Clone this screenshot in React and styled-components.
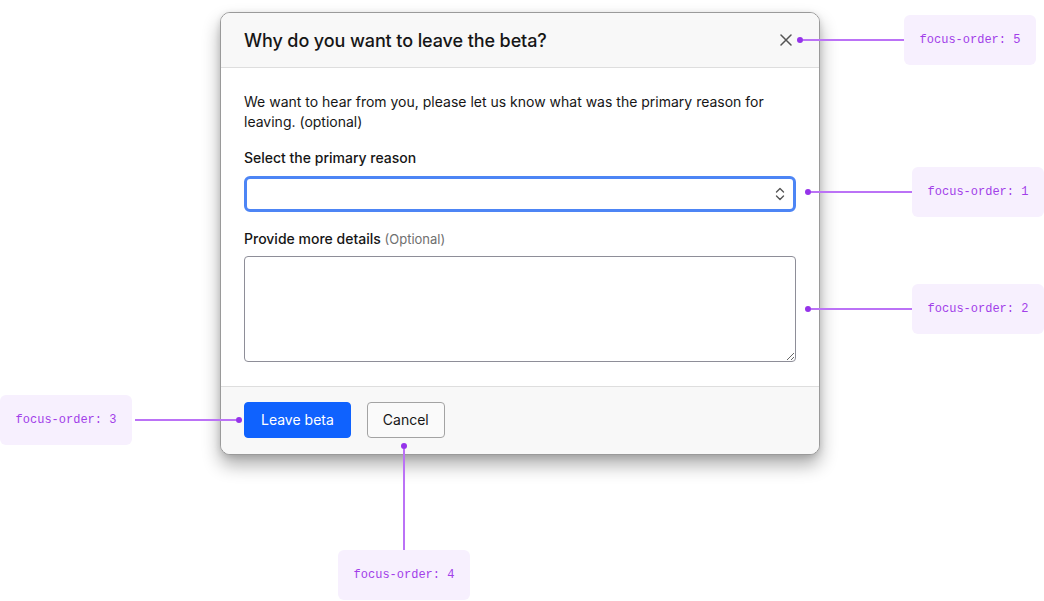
import React from 'react';
import styled, { createGlobalStyle } from 'styled-components';

const GlobalStyle = createGlobalStyle`
    html, body {
        margin: 0;
        padding: 0;
        background: #ffffff;
    }
    body {
        font-family: Inter, "Noto Sans", "Liberation Sans", sans-serif;
        color: #161616;
    }
`

const Canvas = styled.div`
    position: relative;
    width: 1044px;
    height: 601px;
    padding: 12px 0 0 220px;
    box-sizing: border-box;
    overflow: hidden;
`

const Modal = styled.div`
    width: 600px;
    box-sizing: border-box;
    border: 1px solid #9a9a9a;
    border-radius: 10px;
    background: #ffffff;
    box-shadow: 0 10px 18px rgba(0, 0, 0, 0.32), 0 2px 6px rgba(0, 0, 0, 0.12);
    overflow: hidden;
`

const Header = styled.div`
    height: 54px;
    display: flex;
    align-items: center;
    justify-content: space-between;
    padding: 0 23px;
    background: #f8f8f8;
    border-bottom: 1px solid #dedede;
`

const Title = styled.h2`
    margin: 0;
    font-size: 18px;
    font-weight: 500;
    color: #161616;
    letter-spacing: -0.1px;
`

const CloseButton = styled.button`
    width: 20px;
    height: 20px;
    padding: 0;
    border: 0;
    background: none;
    display: flex;
    align-items: center;
    justify-content: center;
    color: #555555;
`

const Body = styled.div`
    padding: 24px 23px 24px;
    display: flex;
    flex-direction: column;
`

const Intro = styled.p`
    margin: 0 0 16px;
    font-size: 14px;
    line-height: 20px;
    color: #161616;
`

const Label = styled.label`
    display: block;
    font-size: 14px;
    line-height: 20px;
    font-weight: 500;
    color: #161616;
    margin-bottom: ${p => p.$gap || 8}px;

    span {
        font-weight: 400;
        font-size: 13px;
        color: #6f6f6f;
    }
`

const SelectBox = styled.div`
    height: 36px;
    box-sizing: border-box;
    border: 3px solid #4d85f5;
    border-radius: 6px;
    background: #ffffff;
    display: flex;
    align-items: center;
    justify-content: flex-end;
    padding-right: 8px;
    margin-bottom: 17px;
    color: #555555;
`

const TextArea = styled.textarea`
    display: block;
    width: 100%;
    height: 106px;
    box-sizing: border-box;
    border: 1px solid #8e8e98;
    border-radius: 4px;
    background: #ffffff;
    resize: vertical;
    font-family: inherit;
    font-size: 14px;
    padding: 8px;
    outline: none;
`

const Footer = styled.div`
    display: flex;
    gap: 16px;
    padding: 15px 23px 16px;
    background: #f8f8f8;
    border-top: 1px solid #dedede;
`

const Button = styled.button`
    height: 36px;
    padding: 0 ${p => (p.$primary ? 16 : 15)}px;
    border-radius: 4px;
    font-family: inherit;
    font-size: 14px;
    line-height: 20px;
    border: 1px solid ${p => (p.$primary ? '#0f62fe' : '#a3a3a3')};
    background: ${p => (p.$primary ? '#0f62fe' : '#fafafa')};
    color: ${p => (p.$primary ? '#ffffff' : '#161616')};
`

/* callouts sit on the canvas next to the element they point at */
const Callout = styled.div`
    position: absolute;
    left: ${p => p.$x}px;
    top: ${p => p.$y}px;
    display: flex;
    flex-direction: ${p => p.$dir || 'row'};
    align-items: center;
`

const Note = styled.div`
    width: 132px;
    height: 50px;
    flex: none;
    border-radius: 6px;
    background: #f7f0fe;
    display: flex;
    align-items: center;
    justify-content: center;
    font-family: "Liberation Mono", "DejaVu Sans Mono", monospace;
    font-size: 12px;
    color: #a23ee9;
`

const Line = styled.div`
    flex: none;
    width: ${p => (p.$vertical ? 2 : p.$len)}px;
    height: ${p => (p.$vertical ? p.$len : 2)}px;
    margin-left: ${p => p.$gap || 0}px;
    background: #bb72f6;
`

const Dot = styled.div`
    flex: none;
    width: 6px;
    height: 6px;
    border-radius: 50%;
    background: #9533ea;
`

const XIcon = () => (
    <svg width="12" height="12" viewBox="0 0 12 12" fill="none" stroke="currentColor" strokeWidth="1.5" strokeLinecap="round">
        <path d="M1 1 L11 11 M11 1 L1 11" />
    </svg>
)

const UpDown = () => (
    <svg width="10" height="14" viewBox="0 0 10 14" fill="none" stroke="currentColor" strokeWidth="1.4" strokeLinecap="round" strokeLinejoin="round">
        <path d="M1.5 5 L5 1.5 L8.5 5" />
        <path d="M1.5 9 L5 12.5 L8.5 9" />
    </svg>
)

export default function App() {
    return (
        <Canvas>
            <GlobalStyle />
            <Modal>
                <Header>
                    <Title>Why do you want to leave the beta?</Title>
                    <CloseButton aria-label="Close"><XIcon /></CloseButton>
                </Header>
                <Body>
                    <Intro>
                        We want to hear from you, please let us know what was the primary reason for leaving. (optional)
                    </Intro>
                    <Label>Select the primary reason</Label>
                    <SelectBox><UpDown /></SelectBox>
                    <Label $gap={7}>Provide more details <span>(Optional)</span></Label>
                    <TextArea />
                </Body>
                <Footer>
                    <Button $primary>Leave beta</Button>
                    <Button>Cancel</Button>
                </Footer>
            </Modal>

            <Callout $x={797} $y={15}>
                <Dot /><Line $len={101} /><Note>focus-order: 5</Note>
            </Callout>
            <Callout $x={805} $y={167}>
                <Dot /><Line $len={101} /><Note>focus-order: 1</Note>
            </Callout>
            <Callout $x={805} $y={284}>
                <Dot /><Line $len={101} /><Note>focus-order: 2</Note>
            </Callout>
            <Callout $x={0} $y={395}>
                <Note>focus-order: 3</Note><Line $len={101} $gap={3} /><Dot />
            </Callout>
            <Callout $x={338} $y={443} $dir="column">
                <Dot /><Line $vertical $len={101} /><Note>focus-order: 4</Note>
            </Callout>
        </Canvas>
    )
}
